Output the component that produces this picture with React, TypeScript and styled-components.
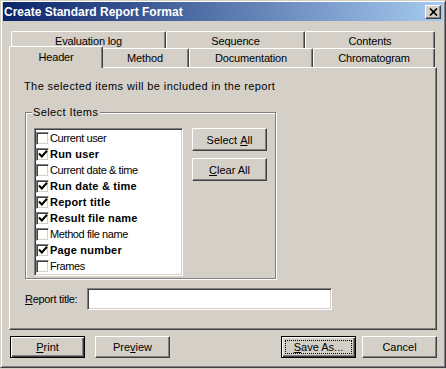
import React from 'react';
import styled, { createGlobalStyle, css } from 'styled-components';

const Global = createGlobalStyle`
  html, body { margin: 0; padding: 0; background: #d4d0c8; }
  body {
    font-family: "Liberation Sans", Arial, sans-serif;
    font-size: 11px;
    color: #000;
  }
  * { box-sizing: border-box; }
`;

const Window = styled.div`
  width: 446px;
  height: 368px;
  background: #d4d0c8;
  border: 1px solid;
  border-color: #d4d0c8 #404040 #404040 #d4d0c8;
  box-shadow: inset 1px 1px #fff, inset -1px -1px #808080;
  padding: 1px 2px 2px 2px;
  display: flex;
  flex-direction: column;
`;

const TitleBar = styled.div`
  height: 19px;
  flex: none;
  display: flex;
  align-items: center;
  justify-content: space-between;
  padding: 1px 2px 0 1px;
  background: linear-gradient(to right, #0a246a, #a6caf0);
`;

const TitleText = styled.span`
  color: #fff;
  font-weight: bold;
  font-size: 12px;
  line-height: 14px;
`;

const CloseButton = styled.div`
  width: 16px;
  height: 14px;
  background: #d4d0c8;
  border: 1px solid;
  border-color: #fff #404040 #404040 #fff;
  box-shadow: inset -1px -1px #808080;
  display: flex;
  align-items: center;
  justify-content: center;
`;

const Body = styled.div`
  flex: 1;
  padding: 10px 6px 0 6px;
  display: flex;
  flex-direction: column;
`;

const TabRow = styled.div<{ $front?: boolean }>`
  display: flex;
  margin-left: 2px;
  height: ${(p) => (p.$front ? 19 : 17)}px;
  position: relative;
  z-index: ${(p) => (p.$front ? 2 : 1)};
`;

const Tab = styled.div<{ $w: number; $selected?: boolean; $front?: boolean }>`
  width: ${(p) => p.$w}px;
  flex: none;
  background: #d4d0c8;
  border-top: 1px solid #fff;
  border-left: 1px solid #fff;
  border-right: 1px solid #404040;
  box-shadow: inset -1px 0 #808080;
  border-radius: 2px 2px 0 0;
  display: flex;
  align-items: center;
  justify-content: center;
  padding-top: ${(p) => (p.$front ? 0 : 2)}px;
  letter-spacing: -0.15px;
  ${(p) =>
    p.$selected &&
    css`
      width: ${p.$w + 4}px;
      margin: -2px -2px -1px -2px;
      padding-bottom: 2px;
      position: relative;
      z-index: 3;
    `}
`;

const Panel = styled.div`
  height: 263px;
  flex: none;
  border: 1px solid;
  border-color: #fff #404040 #404040 #fff;
  box-shadow: inset -1px -1px #808080;
  padding: 12px 14px 0 14px;
  display: flex;
  flex-direction: column;
`;

const Info = styled.div`
  line-height: 13px;
  letter-spacing: 0.4px;
`;

const GroupBox = styled.div`
  position: relative;
  margin: 19px 0 0 1px;
  width: 251px;
  height: 167px;
  border: 1px solid #808080;
  box-shadow: inset 1px 1px #fff, 1px 1px #fff;
  padding: 15px 0 0 8px;
  display: flex;
  gap: 9px;
  align-items: flex-start;
`;

const Legend = styled.span`
  position: absolute;
  top: -7px;
  left: 6px;
  padding: 0 2px 0 1px;
  line-height: 13px;
  background: #d4d0c8;
  letter-spacing: 0.4px;
`;

const ListBox = styled.div`
  width: 149px;
  height: 148px;
  flex: none;
  background: #fff;
  border: 1px solid;
  border-color: #808080 #fff #fff #808080;
  box-shadow: inset 1px 1px #404040, inset -1px -1px #d4d0c8;
  padding: 1px;
  display: flex;
  flex-direction: column;
`;

const Item = styled.div<{ $on?: boolean }>`
  height: 16px;
  display: flex;
  align-items: center;
  gap: 1px;
  white-space: nowrap;
  ${(p) =>
    p.$on
      ? css`
          font-weight: bold;
          letter-spacing: 0.2px;
        `
      : css`
          letter-spacing: -0.4px;
        `}
`;

const Check = styled.span`
  width: 13px;
  height: 13px;
  flex: none;
  background: #fff;
  border: 1px solid;
  border-color: #808080 #fff #fff #808080;
  box-shadow: inset 1px 1px #404040, inset -1px -1px #d4d0c8;
  display: flex;
  align-items: center;
  justify-content: center;
`;

const ButtonColumn = styled.div`
  display: flex;
  flex-direction: column;
  gap: 7px;
`;

const Button = styled.div<{ $w?: number; $h?: number; $default?: boolean; $focus?: boolean }>`
  position: relative;
  width: ${(p) => p.$w ?? 75}px;
  height: ${(p) => p.$h ?? 23}px;
  flex: none;
  background: #d4d0c8;
  display: flex;
  align-items: center;
  justify-content: center;
  ${(p) =>
    p.$default
      ? css`
          border: 1px solid #000;
          box-shadow: inset 1px 1px #fff, inset -1px -1px #404040, inset -2px -2px #808080;
        `
      : css`
          border: 1px solid;
          border-color: #fff #404040 #404040 #fff;
          box-shadow: inset -1px -1px #808080;
        `}
  ${(p) =>
    p.$focus &&
    css`
      &::after {
        content: '';
        position: absolute;
        inset: 3px;
        border: 1px dotted #000;
      }
    `}
`;

const Accel = styled.u`
  text-decoration: underline;
  text-underline-offset: 1px;
`;

const FieldRow = styled.div`
  display: flex;
  align-items: center;
  margin: 9px 0 0 1px;
`;

const FieldLabel = styled.span`
  width: 62px;
  letter-spacing: -0.3px;
`;

const TextInput = styled.div`
  width: 245px;
  height: 22px;
  background: #fff;
  border: 1px solid;
  border-color: #808080 #fff #fff #808080;
  box-shadow: inset 1px 1px #404040, inset -1px -1px #d4d0c8;
`;

const ButtonBar = styled.div`
  display: flex;
  margin: 6px 0 0 1px;
  gap: 10px;
`;

const RightGroup = styled.div`
  display: flex;
  gap: 6px;
  margin-left: auto;
`;

const items: { label: string; on: boolean }[] = [
  { label: 'Current user', on: false },
  { label: 'Run user', on: true },
  { label: 'Current date & time', on: false },
  { label: 'Run date & time', on: true },
  { label: 'Report title', on: true },
  { label: 'Result file name', on: true },
  { label: 'Method file name', on: false },
  { label: 'Page number', on: true },
  { label: 'Frames', on: false },
];

const backTabs = [
  { label: 'Evaluation log', w: 155 },
  { label: 'Sequence', w: 139 },
  { label: 'Contents', w: 130 },
];

const frontTabs = [
  { label: 'Header', w: 90, selected: true },
  { label: 'Method', w: 88 },
  { label: 'Documentation', w: 124 },
  { label: 'Chromatogram', w: 122 },
];

const CheckMark = () => (
  <svg width="10" height="10" viewBox="0 0 10 10">
    <polyline points="1,4.5 3.8,7.5 9,1.8" fill="none" stroke="#000" strokeWidth="2.1" />
  </svg>
);

const CloseX = () => (
  <svg width="9" height="8" viewBox="0 0 9 8">
    <path d="M1 0.5 L8 7.5 M8 0.5 L1 7.5" stroke="#000" strokeWidth="1.7" fill="none" />
  </svg>
);

export default function App() {
  return (
    <>
      <Global />
      <Window>
        <TitleBar>
          <TitleText>Create Standard Report Format</TitleText>
          <CloseButton>
            <CloseX />
          </CloseButton>
        </TitleBar>
        <Body>
          <TabRow>
            {backTabs.map((t) => (
              <Tab key={t.label} $w={t.w}>
                {t.label}
              </Tab>
            ))}
          </TabRow>
          <TabRow $front>
            {frontTabs.map((t) => (
              <Tab key={t.label} $w={t.w} $front $selected={t.selected}>
                {t.label}
              </Tab>
            ))}
          </TabRow>
          <Panel>
            <Info>The selected items will be included in the report</Info>
            <GroupBox>
              <Legend>Select Items</Legend>
              <ListBox>
                {items.map((it) => (
                  <Item key={it.label} $on={it.on}>
                    <Check>{it.on && <CheckMark />}</Check>
                    {it.label}
                  </Item>
                ))}
              </ListBox>
              <ButtonColumn>
                <Button>
                  Select&nbsp;<Accel>A</Accel>ll
                </Button>
                <Button>
                  <Accel>C</Accel>lear All
                </Button>
              </ButtonColumn>
            </GroupBox>
            <FieldRow>
              <FieldLabel>
                <Accel>R</Accel>eport title:
              </FieldLabel>
              <TextInput />
            </FieldRow>
          </Panel>
          <ButtonBar>
            <Button $h={22} $default>
              <Accel>P</Accel>rint
            </Button>
            <Button $h={22}>
              Pre<Accel>v</Accel>iew
            </Button>
            <RightGroup>
              <Button $h={22} $default $focus>
                <Accel>S</Accel>ave As...
              </Button>
              <Button $h={22}>Cancel</Button>
            </RightGroup>
          </ButtonBar>
        </Body>
      </Window>
    </>
  );
}
